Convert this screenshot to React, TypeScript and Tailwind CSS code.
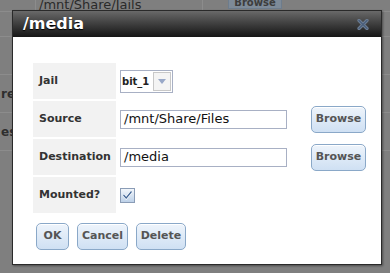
import React from "react";

const font = { fontFamily: '"DejaVu Sans", Verdana, sans-serif' };

function BlueButton({ label, className = "" }: { label: string; className?: string }) {
  return (
    <button
      className={`flex items-center justify-center rounded-[5px] border border-[#8aa8c8] bg-gradient-to-b from-[#eef4fb] to-[#cfe0f3] text-[11px] font-bold text-[#555] shadow-[inset_0_1px_0_#fff] ${className}`}
    >
      {label}
    </button>
  );
}

function Row({ label, children }: { label: string; children: React.ReactNode }) {
  return (
    <div className="flex h-[36px] items-center">
      <div className="flex h-full w-[83px] items-center bg-[#f2f2f2] pl-[6px] text-[11px] font-bold text-[#333]">
        {label}
      </div>
      <div className="flex flex-1 items-center pl-[4px]">{children}</div>
    </div>
  );
}

export default function App() {
  return (
    <div className="relative h-[273px] w-[390px] overflow-hidden bg-[#7f7f7f]" style={font}>
      {/* page behind the overlay */}
      <div className="flex h-[12px] border-b border-[#8c8c8c]">
        <div className="w-[36px] border-r border-[#8c8c8c]" />
        <div className="flex w-[167px] items-end border-r border-[#8c8c8c] pl-[3px] text-[13px] leading-[13px] text-[#2a2a2a]">
          /mnt/Share/Jails
        </div>
        <div className="w-[25px]" />
        <div className="flex h-[9px] w-[54px] items-end justify-center border border-t-0 border-[#6d7c8c] bg-[#7d8a98] text-[10px] font-bold leading-[11px] text-[#3c3c3c]">
          Browse
        </div>
      </div>
      <div className="flex flex-col">
        <div className="h-[25px] border-b border-[#8c8c8c]" />
        <div className="h-[38px] border-b border-[#8c8c8c]" />
        <div className="flex h-[38px] items-center border-b border-[#8c8c8c] pl-[1px] text-[12px] font-bold text-[#2e2e2e]">
          re
        </div>
        <div className="flex h-[38px] items-center border-b border-[#8c8c8c] pl-[1px] text-[12px] font-bold text-[#2e2e2e]">
          es
        </div>
      </div>

      {/* dialog */}
      <div className="absolute left-[12px] top-[10px] flex h-[255px] w-[370px] flex-col border border-[#2a2a2a] bg-white shadow-[1px_1px_2px_rgba(0,0,0,0.4)]">
        <div className="flex h-[26px] items-center justify-between bg-gradient-to-b from-[#6a6a6a] via-[#3e3e3e] to-[#161616] pl-[10px] pr-[12px]">
          <span className="text-[16px] font-bold text-white [text-shadow:0_1px_1px_#000]">/media</span>
          <svg width="12" height="11" viewBox="0 0 12 11">
            <path d="M2 1.5 L10 9.5 M10 1.5 L2 9.5" stroke="#6f7f94" strokeWidth="3.2" strokeLinecap="round" />
            <path d="M2 1.5 L10 9.5 M10 1.5 L2 9.5" stroke="#4a5f7c" strokeWidth="1.4" strokeLinecap="round" />
          </svg>
        </div>
        <div className="flex flex-1 flex-col pl-[20px] pt-[26px]">
          <div className="flex flex-col gap-[2px]">
            <Row label="Jail">
              <div className="flex h-[23px] items-stretch border border-[#a8b0c4] bg-white">
                <span className="flex items-center pl-[1px] pr-[3px] text-[10px] font-bold text-[#222]">bit_1</span>
                <span className="m-[1px] flex w-[18px] items-center justify-center border border-[#c8c8c8] bg-[#f4f4f4]">
                  <svg width="8" height="5" viewBox="0 0 8 5">
                    <path d="M0 0 H8 L4 5 Z" fill="#98a8c8" />
                  </svg>
                </span>
              </div>
            </Row>
            <Row label="Source">
              <div className="flex w-full items-center">
                <div className="flex h-[19px] w-[167px] items-center border border-[#a8b0c4] pl-[3px] text-[13px] text-[#111]">
                  /mnt/Share/Files
                </div>
                <BlueButton label="Browse" className="ml-[24px] h-[27px] w-[55px]" />
              </div>
            </Row>
            <Row label="Destination">
              <div className="flex w-full items-center">
                <div className="flex h-[19px] w-[167px] items-center border border-[#a8b0c4] pl-[3px] text-[13px] text-[#111]">
                  /media
                </div>
                <BlueButton label="Browse" className="ml-[24px] h-[27px] w-[55px]" />
              </div>
            </Row>
            <Row label="Mounted?">
              <div className="flex h-[15px] w-[15px] items-center justify-center border border-[#8a9cb6] bg-gradient-to-b from-[#f2f6fb] to-[#bdd1e8]">
                <svg width="11" height="10" viewBox="0 0 11 10">
                  <path d="M1.5 5 L4.2 8 L9.5 1.5" stroke="#fff" strokeWidth="2.6" fill="none" />
                  <path d="M1.5 5 L4.2 8 L9.5 1.5" stroke="#3f6496" strokeWidth="1.2" fill="none" />
                </svg>
              </div>
            </Row>
          </div>
          <div className="ml-[3px] mt-[10px] flex gap-[8px]">
            <BlueButton label="OK" className="h-[27px] w-[33px]" />
            <BlueButton label="Cancel" className="h-[27px] w-[51px]" />
            <BlueButton label="Delete" className="h-[27px] w-[50px]" />
          </div>
        </div>
      </div>
    </div>
  );
}
